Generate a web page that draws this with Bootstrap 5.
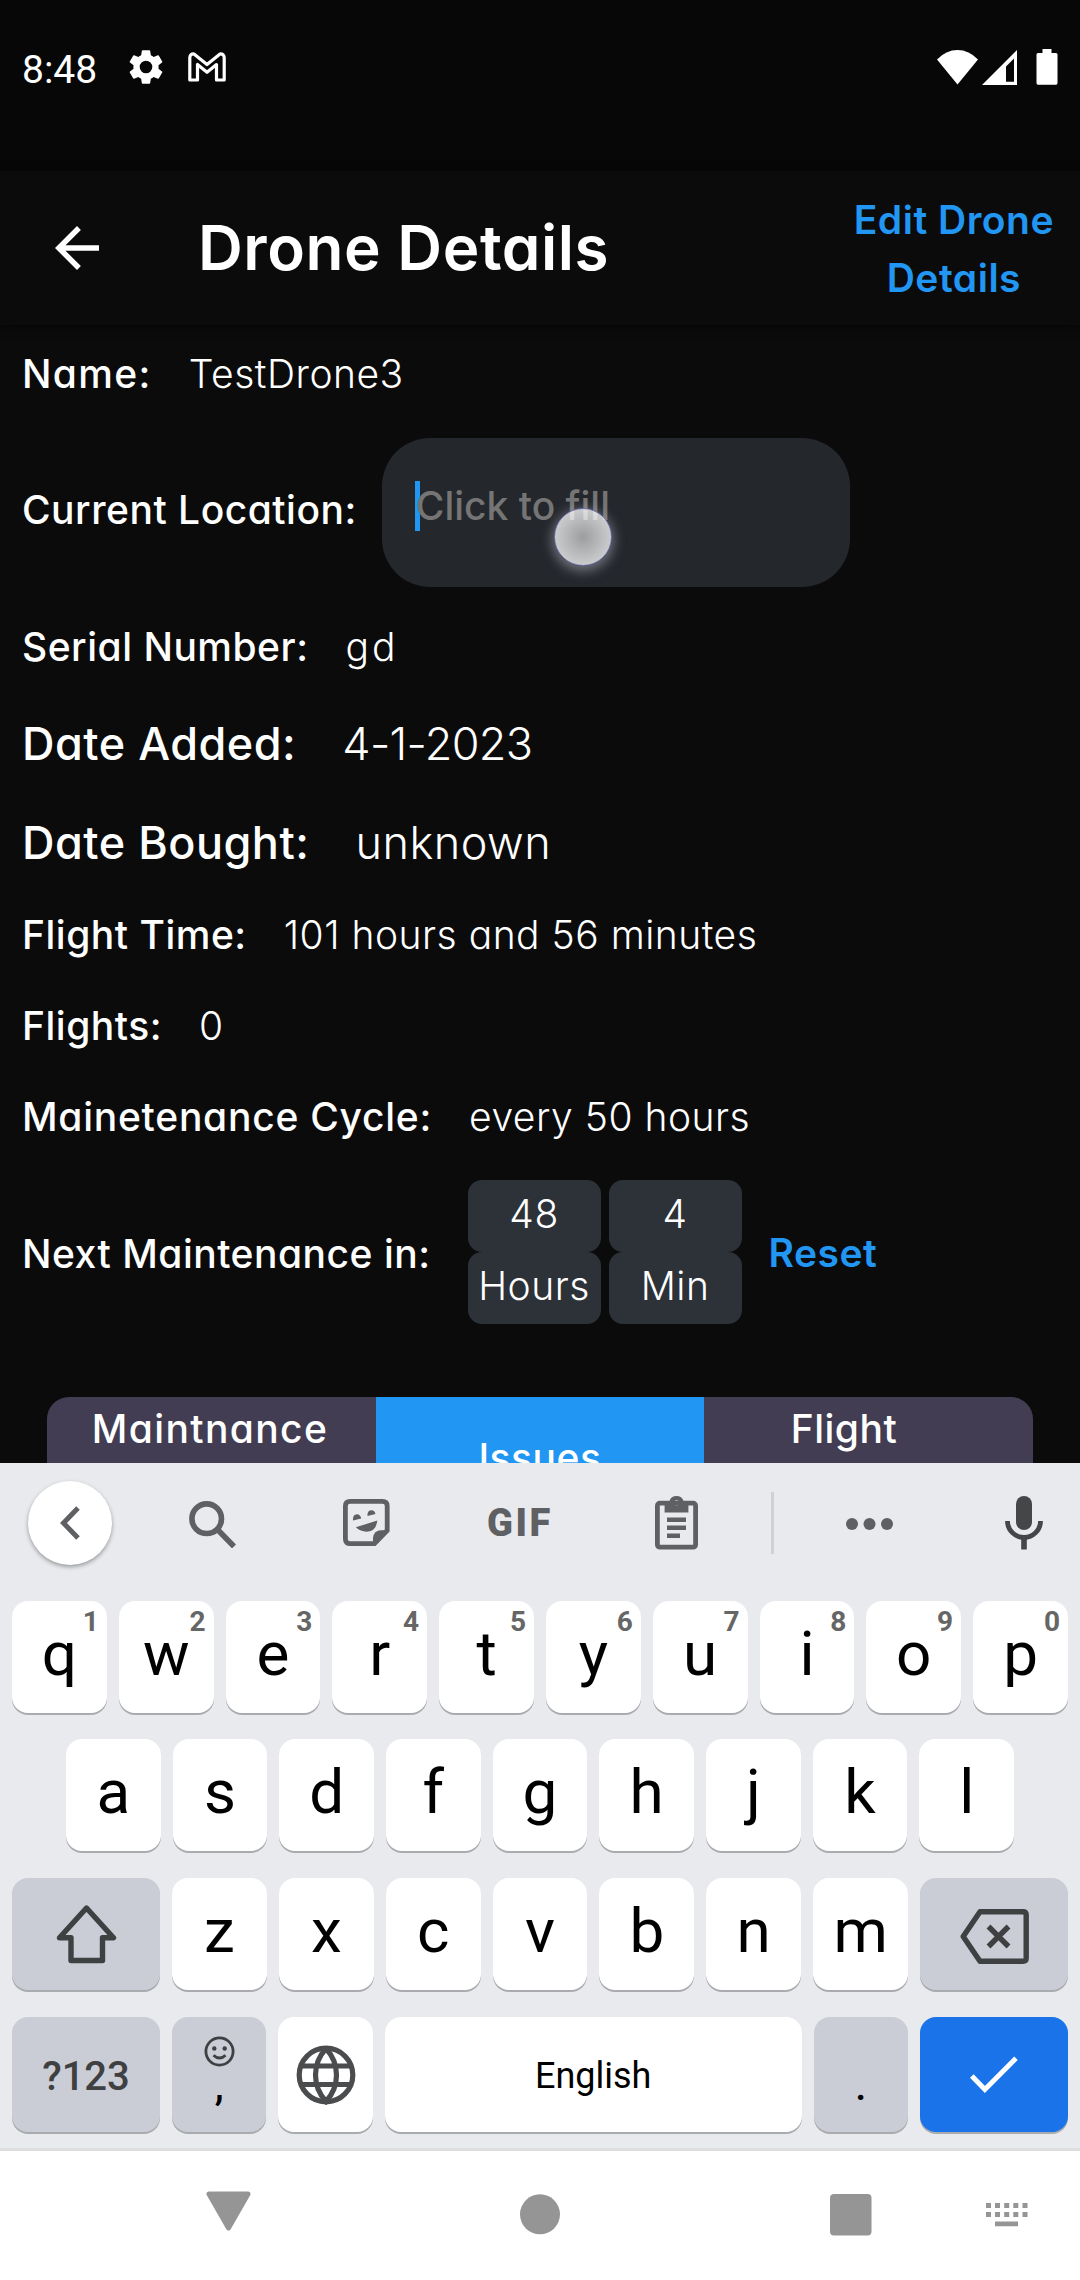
<!DOCTYPE html>
<html lang="en">
<head>
<meta charset="utf-8">
<meta name="viewport" content="width=device-width, initial-scale=1">
<title>Drone Details</title>
<link rel="stylesheet" href="https://cdn.jsdelivr.net/npm/bootstrap@5.3.0/dist/css/bootstrap.min.css">
<style>
  body { width: 1080px; height: 2280px; overflow: hidden; background: #0b0b0b; color: #fff; font-family: Inter, sans-serif; font-feature-settings: "cv11"; }
  svg { display: block; flex: none; }

  .app-pane { height: 1463px; overflow: hidden; font-size: 39px; line-height: 58px; letter-spacing: .013em; }
  .status-strip { height: 171px; background: #070707; padding: 0 22px 37px 22px; font-family: Roboto, sans-serif; font-size: 39px; letter-spacing: 0; }
  .clock { width: 75px; padding-top: 5px; margin-right: 28px; white-space: nowrap; }
  .title-bar { height: 154px; padding: 0 26px 0 44px; box-shadow: 0 2px 8px #060606; }
  .title-text { font-size: 62px; font-weight: 600; margin-left: 88px; letter-spacing: .009em; }
  .link-blue { color: #2196f3; font-weight: 600; text-align: center; text-decoration: none; padding-top: 2px; }

  .info-row { display: flex; align-items: center; padding-left: 22px; padding-bottom: 2px; gap: 37px; white-space: nowrap; }
  .info-label { font-weight: 500; }
  .info-value { font-weight: 300; }
  .info-lg { font-size: 45px; gap: 46px; }
  .h-name { height: 99px; }
  .h-loc { height: 176px; gap: 25px; padding-bottom: 0; }
  .h-serial { height: 95px; }
  .h-flight { height: 85px; }
  .h-count { height: 97px; }
  .h-next { height: 184px; padding-bottom: 0; }
  .sp-name { letter-spacing: .035em; }
  .sp-cycle { letter-spacing: .019em; }
  .sp-wide { letter-spacing: .08em; }
  .sp-date { letter-spacing: -.015em; }

  .loc-input { width: 468px; height: 149px; border-radius: 48px; background: #24272c; color: #757575; font-weight: 500; padding: 0 0 12px 33px; position: relative; letter-spacing: 0; }
  .caret { width: 5px; height: 50px; background: #2196f3; margin-right: -4px; }
  .touch-dot { position: absolute; left: 172px; top: 70px; width: 58px; height: 58px; border-radius: 50%; background: radial-gradient(circle closest-side, rgba(255,255,255,.55), rgba(255,255,255,.76)); border: 1px solid #6f71ac; box-shadow: 0 3px 12px 2px rgba(190,190,205,.5); }
  .time-col { width: 133px; }
  .time-box { height: 72px; border-radius: 14px; background: #2d3138; text-align: center; font-weight: 300; padding-top: 5px; }
  .reset-link { margin-left: -10px; }

  .tab-strip { margin: 53px 47px 0; height: 66px; border-radius: 22px 22px 0 0; overflow: hidden; background: #423d52; text-align: center; font-weight: 500; }
  .tab-cell { flex: 0 0 329px; padding-top: 3px; white-space: nowrap; }
  .tab-on { flex-basis: 328px; background: #2196f3; padding-top: 32px; }
  .tab-first { letter-spacing: .035em; padding-right: 3px; }
  .tab-end { padding-right: 49px; }

  .keyboard { height: 688px; background: #e8eaed; border-bottom: 3px solid #dedede; font-family: Roboto, sans-serif; color: #000; }
  .key-tools { height: 138px; padding: 0 0 19px 28px; color: #5f6063; }
  .back-disc { width: 84px; height: 84px; border-radius: 50%; background: #fff; box-shadow: 0 2px 4px rgba(0,0,0,.35); margin-right: 77px; }
  .gif-word { width: 66px; margin: 0 102px 0 97px; font-size: 38px; line-height: 40px; font-weight: 900; letter-spacing: 2.5px; }
  .tool-rule { width: 3px; height: 62px; background: #cfd1d4; margin: 0 72px 0 73px; }
  .key-line { height: 112px; gap: 12px; margin: 0 12px 27px; }
  .key-top { margin-bottom: 26px; }
  .key-mid { margin-left: 66px; margin-right: 66px; }
  .key { flex: 1 1 0; position: relative; border-radius: 16px; background: #fff; box-shadow: 0 2px 0 #a9abae; font-size: 62px; line-height: 106px; text-align: center; }
  .key-hint { position: absolute; right: 8px; top: 5px; font-size: 28px; line-height: 32px; font-weight: 700; color: #666; }
  .key-dim { background: #cbcdd6; }
  .key-wide { flex: 0 0 148px; }
  .key-std { flex: 0 0 94.4px; }
  .key-last { height: 115px; margin-bottom: 0; }
  .key-123 { font-size: 40px; font-weight: 500; color: #3f4042; padding-top: 7px; }
  .key-go { background: #1a73e8; }
  .key-space { font-size: 36px; padding-top: 6px; }
  .punct { font-size: 40px; line-height: 40px; font-weight: 500; }
  .nav-strip { height: 129px; background: #fff; color: #959595; }
</style>
</head>
<body>
<main class="app-pane">
  <div class="status-strip d-flex align-items-center">
    <span class="clock">8:48</span>
    <svg width="42" height="42" viewBox="0 0 24 24" fill="#fff"><path d="M19.14 12.94c.04-.3.06-.61.06-.94s-.02-.64-.07-.94l2.03-1.58a.49.49 0 0 0 .12-.61l-1.92-3.32a.49.49 0 0 0-.59-.22l-2.39.96a7 7 0 0 0-1.62-.94L14.4 2.81a.48.48 0 0 0-.48-.41h-3.84a.47.47 0 0 0-.47.41l-.36 2.54c-.59.24-1.13.57-1.62.94l-2.39-.96a.48.48 0 0 0-.59.22L2.74 8.87a.47.47 0 0 0 .12.61l2.03 1.58a6 6 0 0 0-.02 1.88l-2.03 1.58a.49.49 0 0 0-.12.61l1.92 3.32c.12.22.37.29.59.22l2.39-.96c.5.38 1.03.7 1.62.94l.36 2.54c.05.24.24.41.48.41h3.84c.24 0 .44-.17.47-.41l.36-2.54a7 7 0 0 0 1.62-.94l2.39.96c.22.08.47 0 .59-.22l1.92-3.32a.47.47 0 0 0-.12-.61zM12 15.6a3.6 3.6 0 1 1 0-7.2 3.6 3.6 0 0 1 0 7.2z"/></svg>
    <svg class="me-auto" style="margin-left:21px" width="38" height="30" viewBox="0 0 38 30" fill="none" stroke="#fff" stroke-width="3.200" stroke-linejoin="round"><path d="M1.800 28V5.500Q2 1.600 6 2L19 12.600 32 2Q36 1.600 36.200 5.500V28H28.500V12.500L19 20.300 9.500 12.500V28Z"/></svg>
    <svg width="41" height="35" viewBox="0 0 41 35" fill="#fff"><path d="M20.500 34.500 0 9.500Q9 0 20.500 0T41 9.500Z"/></svg>
    <svg class="ms-1" width="35" height="35" viewBox="0 0 35 35" fill="#fff" fill-rule="evenodd"><path d="M0 35 35 0V35ZM24 16.500V31.700H32V8.500Z"/></svg>
    <svg style="margin-left:19px" width="22" height="36" viewBox="0 0 22 36" fill="#fff"><path d="M6.500 0H15.500V4H20Q21.500 4 21.500 5.500V34Q21.500 35.700 20 35.700H2Q.5 35.700.5 34V5.500Q.5 4 2 4H6.500Z"/></svg>
  </div>

  <header class="title-bar d-flex align-items-center">
    <svg width="66" height="66" viewBox="0 0 24 24" fill="#fff"><path d="M20 11H7.830l5.590-5.590L12 4l-8 8 8 8 1.410-1.410L7.830 13H20z"/></svg>
    <h1 class="title-text me-auto mb-0">Drone Details</h1>
    <a class="link-blue">Edit Drone<br>Details</a>
  </header>

  <div class="info-row h-name"><span class="info-label sp-name">Name:</span><span class="info-value">TestDrone3</span></div>
  <div class="info-row h-loc">
    <span class="info-label pb-1">Current Location:</span>
    <div class="loc-input d-flex align-items-center"><span class="caret"></span><span>Click to fill</span><span class="touch-dot"></span></div>
  </div>
  <div class="info-row h-serial"><span class="info-label">Serial Number:</span><span class="info-value sp-wide">gd</span></div>
  <div class="info-row info-lg h-name"><span class="info-label">Date Added:</span><span class="info-value sp-date">4-1-2023</span></div>
  <div class="info-row info-lg h-name"><span class="info-label">Date Bought:</span><span class="info-value">unknown</span></div>
  <div class="info-row h-flight"><span class="info-label">Flight Time:</span><span class="info-value">101 hours and 56 minutes</span></div>
  <div class="info-row h-count"><span class="info-label">Flights:</span><span class="info-value">0</span></div>
  <div class="info-row h-flight"><span class="info-label sp-cycle">Mainetenance Cycle:</span><span class="info-value">every 50 hours</span></div>
  <div class="info-row h-next">
    <span class="info-label pt-1">Next Maintenance in:</span>
    <div class="d-flex gap-2">
      <div class="time-col"><div class="time-box">48</div><div class="time-box">Hours</div></div>
      <div class="time-col"><div class="time-box">4</div><div class="time-box">Min</div></div>
    </div>
    <a class="link-blue reset-link">Reset</a>
  </div>

  <div class="tab-strip d-flex">
    <div class="tab-cell tab-first">Maintnance</div>
    <div class="tab-cell tab-on">Issues</div>
    <div class="tab-cell tab-end">Flight</div>
  </div>
</main>

<section class="keyboard">
  <div class="key-tools d-flex align-items-center">
    <div class="back-disc d-flex align-items-center justify-content-center"><svg width="20" height="34" viewBox="0 0 20 34" fill="none" stroke="currentColor" stroke-width="5"><path d="M18 2 3.500 17 18 32"/></svg></div>
    <svg class="mt-1" width="47" height="47" viewBox="0 0 47 47" fill="none" stroke="currentColor" stroke-width="5.600"><circle cx="17.700" cy="17.700" r="14.800"/><path d="M28.500 28.500 45 45.500"/></svg>
    <svg style="margin-left:107px" width="47" height="47" viewBox="0 0 47 47"><path d="M7 2.400H39.500Q44.200 2.400 44.200 7V31.500L31.500 44.600H7Q2.400 44.600 2.400 40V7Q2.400 2.400 7 2.400Z" fill="none" stroke="currentColor" stroke-width="4.800"/><g fill="currentColor"><path d="M30 46V39Q31 31.500 38 31.300H46L32 46.500Z"/><path d="M10 21.500Q9.500 15.500 14 15.300 17.500 15.500 18.200 19.500ZM24.500 17Q24 11.300 28.500 11.200 31.800 11.500 32.500 15ZM12.800 28.300 34.300 21.500Q33.500 30 27 32.300 19 34 12.800 28.300Z"/></g></svg>
    <span class="gif-word">GIF</span>
    <svg width="43" height="54" viewBox="0 0 43 54"><rect x="2.400" y="7.200" width="38.200" height="44" rx="2.500" fill="none" stroke="currentColor" stroke-width="4.800"/><path fill="currentColor" fill-rule="evenodd" d="M9.600 5H14.500Q16 0 21.500 0T28.500 5H33.400V16.500H9.600ZM21.500 4.200a2.700 2.700 0 1 0 .01 0ZM12 21.500H31V26H12ZM12 29.500H31V34H12ZM12 37.500H25V42H12Z"/></svg>
    <span class="tool-rule"></span>
    <svg class="mt-1" width="47" height="14" viewBox="0 0 47 14" fill="currentColor"><circle cx="6" cy="6" r="6"/><circle cx="23.500" cy="6" r="6"/><circle cx="41" cy="6" r="6"/></svg>
    <svg style="margin-left:112px" width="38" height="54" viewBox="0 0 38 54" fill="#454648"><rect x="11" width="16" height="34" rx="8"/><path d="M2.500 25A16.500 16.500 0 0 0 35.500 25" fill="none" stroke="#454648" stroke-width="4.800"/><rect x="16.200" y="41" width="5.600" height="12.500"/></svg>
  </div>

  <div class="key-line key-top d-flex">
    <div class="key">q<span class="key-hint">1</span></div><div class="key">w<span class="key-hint">2</span></div><div class="key">e<span class="key-hint">3</span></div><div class="key">r<span class="key-hint">4</span></div><div class="key">t<span class="key-hint">5</span></div><div class="key">y<span class="key-hint">6</span></div><div class="key">u<span class="key-hint">7</span></div><div class="key">i<span class="key-hint">8</span></div><div class="key">o<span class="key-hint">9</span></div><div class="key">p<span class="key-hint">0</span></div>
  </div>
  <div class="key-line key-mid d-flex">
    <div class="key">a</div><div class="key">s</div><div class="key">d</div><div class="key">f</div><div class="key">g</div><div class="key">h</div><div class="key">j</div><div class="key">k</div><div class="key">l</div>
  </div>
  <div class="key-line d-flex">
    <div class="key key-dim key-wide d-flex align-items-center justify-content-center"><svg width="61" height="60" viewBox="0 0 61 60" fill="none" stroke="#3f4042" stroke-width="5.400" stroke-linejoin="round"><path d="M30.500 4 57.500 33.800H46.500V56.500H15V33.800H3.500Z"/></svg></div>
    <div class="key">z</div><div class="key">x</div><div class="key">c</div><div class="key">v</div><div class="key">b</div><div class="key">n</div><div class="key">m</div>
    <div class="key key-dim key-wide d-flex align-items-center justify-content-center"><svg class="mt-1" width="69" height="55" viewBox="0 0 69 55" fill="none" stroke="#3f4042" stroke-width="5.400" stroke-linejoin="round"><path d="M20 2.800H63Q66.200 2.800 66.200 6V49Q66.200 52.200 63 52.200H20L3.200 27.500Z"/><path d="M28.500 17.500 48.500 37.500M48.500 17.500 28.500 37.500"/></svg></div>
  </div>
  <div class="key-line key-last d-flex">
    <div class="key key-dim key-wide key-123">?123</div>
    <div class="key key-dim key-std d-flex flex-column align-items-center"><svg style="margin-top:19px" width="31" height="31" viewBox="0 0 31 31" fill="none" stroke="#3f4042" stroke-width="2.800"><circle cx="15.500" cy="15.500" r="13.600"/><path d="M9.500 19.200Q15.500 25 21.500 19.200"/><g fill="#3f4042" stroke="none"><circle cx="10.300" cy="12.500" r="2.200"/><circle cx="20.700" cy="12.500" r="2.200"/></g></svg><span class="punct">,</span></div>
    <div class="key key-std d-flex align-items-center justify-content-center"><svg width="60" height="60" viewBox="0 0 60 60" fill="none" stroke="#4b4c4e" stroke-width="5.200"><circle cx="30" cy="30" r="26.800"/><path d="M30 3.500Q19.500 15 19.500 30T30 56.500Q40.500 45 40.500 30T30 3.500M5 21H55M5 39.500H55"/></svg></div>
    <div class="key key-space">English</div>
    <div class="key key-dim key-std d-flex flex-column align-items-center"><span class="punct" style="margin-top:50px">.</span></div>
    <div class="key key-go key-wide d-flex align-items-center justify-content-center"><svg width="48" height="38" viewBox="0 0 48 38" fill="none" stroke="#fff" stroke-width="5"><path d="M1.800 20 14.900 33.500 46 2.300"/></svg></div>
  </div>
</section>

<nav class="nav-strip d-flex align-items-start">
  <svg style="margin:40px 0 0 206px" width="45" height="40" viewBox="0 0 45 40" fill="currentColor" stroke="currentColor" stroke-width="5" stroke-linejoin="round"><path d="M3 3H42L22.500 37Z"/></svg>
  <svg style="margin:43px 0 0 269px" width="40" height="41" viewBox="0 0 40 41" fill="currentColor"><circle cx="20" cy="20.300" r="20"/></svg>
  <svg style="margin:43px 0 0 270px" width="42" height="42" viewBox="0 0 42 42" fill="currentColor"><rect width="41.500" height="41.500" rx="4"/></svg>
  <svg style="margin:52px 0 0 114px" width="42" height="24" viewBox="0 0 42 24" fill="currentColor"><path d="M0 0h5v5h-5zM9 0h5v5h-5zM18.200 0h5v5h-5zM27.300 0h5v5h-5zM36.500 0h5v5h-5zM0 9h5v5h-5zM9 9h5v5h-5zM18.200 9h5v5h-5zM27.300 9h5v5h-5zM36.500 9h5v5h-5zM9 18.500h23v4.800h-23z"/></svg>
</nav>
<script src="https://cdn.jsdelivr.net/npm/bootstrap@5.3.0/dist/js/bootstrap.bundle.min.js"></script>
</body>
</html>
